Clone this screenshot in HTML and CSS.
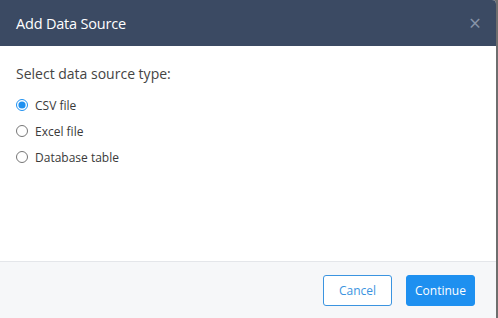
FILE: index.html
```html
<!DOCTYPE html>
<html lang="en">
<head>
    <meta charset="UTF-8">
    <meta name="viewport" content="width=device-width, initial-scale=1.0">
    <title>Add Data Source</title>
    <link rel="stylesheet" href="styles.css">
</head>
<body>
    <div class="modal">
        <div class="modal-header">
            <span class="modal-title">Add Data Source</span>
            <span class="close">&times;</span>
        </div>
        <div class="modal-body">
            <p class="prompt">Select data source type:</p>
            <label class="option"><input type="radio" name="src" checked> CSV file</label>
            <label class="option"><input type="radio" name="src"> Excel file</label>
            <label class="option"><input type="radio" name="src"> Database table</label>
        </div>
        <div class="modal-footer">
            <button class="btn btn-cancel">Cancel</button>
            <button class="btn btn-primary">Continue</button>
        </div>
    </div>
</body>
</html>
```

FILE: styles.css
```css
body {
    margin: 0;
    padding: 0;
    height: 318px;
    background-color: #6e6e6e;
    font-family: "Open Sans", "DejaVu Sans", sans-serif;
    overflow: hidden;
}

.modal {
    display: flex;
    flex-direction: column;
    width: 496px;
    height: 318px;
    background-color: #fff;
    border-top-right-radius: 4px;
    overflow: hidden;
}

.modal-header {
    display: flex;
    justify-content: space-between;
    align-items: center;
    height: 46px;
    padding: 0 14px 0 16px;
    background-color: #3b4a63;
    box-sizing: border-box;
}

.modal-title {
    color: #fff;
    font-size: 14.5px;
    font-weight: 400;
    letter-spacing: -0.2px;
}

.close {
    color: #8794a8;
    font-size: 21px;
    line-height: 1;
    margin-right: 1px;
}

.modal-body {
    flex: 1;
    display: flex;
    flex-direction: column;
    padding: 18px 16px 0 16px;
}

.prompt {
    margin: 0 0 9px 0;
    font-size: 14px;
    color: #444;
}

.option {
    display: flex;
    align-items: center;
    height: 26px;
    font-size: 12px;
    color: #3a3a3a;
}

.option input {
    margin: 0 7px 0 0;
    width: 12px;
    height: 12px;
    accent-color: #1e90f0;
}

.modal-footer {
    display: flex;
    justify-content: flex-end;
    gap: 14px;
    height: 57px;
    padding: 13px 21px 0 0;
    box-sizing: border-box;
    background-color: #f6f7f9;
    border-top: 1px solid #e4e6ea;
}

.btn {
    width: 69px;
    height: 31px;
    border-radius: 3px;
    font-family: "Open Sans", "DejaVu Sans", sans-serif;
    font-size: 12px;
    cursor: pointer;
}

.btn-cancel {
    background-color: #fff;
    border: 1px solid #3b94e0;
    color: #3b94e0;
}

.btn-primary {
    background-color: #1e90f0;
    border: 1px solid #1e90f0;
    color: #fff;
}
```
